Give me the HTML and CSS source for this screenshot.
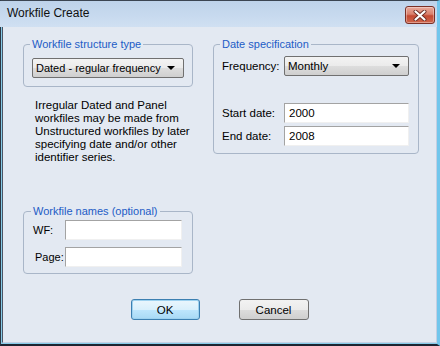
FILE: index.html
```html
<!DOCTYPE html>
<html lang="en">
<head>
    <meta charset="UTF-8">
    <title>Workfile Create</title>
    <link rel="stylesheet" href="styles.css">
</head>
<body>
    <div class="window">
        <div class="titlebar">
            <span class="title">Workfile Create</span>
            <button class="close" aria-label="Close">
                <svg width="16" height="11" viewBox="0 0 16 11">
                    <path d="M3.5 1.5 L12.5 9.5 M12.5 1.5 L3.5 9.5" stroke="#6b2c24" stroke-width="4" stroke-linecap="round"/>
                    <path d="M3.5 1.5 L12.5 9.5 M12.5 1.5 L3.5 9.5" stroke="#ffffff" stroke-width="2.2" stroke-linecap="round"/>
                </svg>
            </button>
        </div>

        <div class="client">
            <div class="columns">
                <div class="col-left">
                    <fieldset class="group group-type">
                        <legend>Workfile structure type</legend>
                        <div class="select select-type">
                            <span>Dated - regular frequency</span>
                            <i class="arrow"></i>
                        </div>
                    </fieldset>

                    <p class="note">Irregular Dated and Panel workfiles may be made from Unstructured workfiles by later specifying date and/or other identifier series.</p>

                    <fieldset class="group group-names">
                        <legend>Workfile names (optional)</legend>
                        <div class="row">
                            <label class="lbl-wf">WF:</label>
                            <div class="input"></div>
                        </div>
                        <div class="row">
                            <label class="lbl-page">Page:</label>
                            <div class="input"></div>
                        </div>
                    </fieldset>
                </div>

                <fieldset class="group group-date">
                    <legend>Date specification</legend>
                    <div class="form-grid">
                        <label>Frequency:</label>
                        <div class="select">
                            <span>Monthly</span>
                            <i class="arrow"></i>
                        </div>
                        <label class="spaced">Start date:</label>
                        <div class="input spaced">2000</div>
                        <label>End date:</label>
                        <div class="input">2008</div>
                    </div>
                </fieldset>
            </div>

            <div class="buttons">
                <button class="btn btn-default">OK</button>
                <button class="btn">Cancel</button>
            </div>
        </div>
    </div>
</body>
</html>
```

FILE: styles.css
```css
* {
    box-sizing: border-box;
}
body {
    margin: 0;
    font-family: "Liberation Sans", Arial, sans-serif;
    font-size: 11px;
    color: #000;
    background: #fff;
}
.window {
    width: 440px;
    height: 346px;
    background: #86cbe8;
    border-top: 1px solid #3b4552;
    border-left: 1px solid #2d3744;
    border-right: 3px solid #72c6ec;
    border-bottom: 2px solid #1d2430;
    display: flex;
    flex-direction: column;
}
.titlebar {
    height: 26px;
    margin-left: -1px;
    background: linear-gradient(#bed3ea, #c8daef 60%, #d0e0f2);
    display: flex;
    align-items: center;
    justify-content: space-between;
    padding: 0 2px 2px 7px;
}
.title {
    font-size: 12px;
    color: #101010;
}
.close {
    width: 30px;
    height: 18px;
    margin-top: 4px;
    padding: 0;
    border: 1px solid #7b3026;
    border-radius: 3px;
    background: linear-gradient(#e9aa9c, #d9806c 45%, #c44a33 55%, #d0674d);
    box-shadow: inset 0 0 0 1px rgba(255, 255, 255, 0.35);
    display: flex;
    align-items: center;
    justify-content: center;
}
.client {
    flex: 1;
    margin: 0 0 1px 1px;
    background: #e3e9f2;
    border-left: 1px solid #4a5566;
    border-right: 1px solid #c4cfe2;
    border-bottom: 1px solid #c4cfe2;
    padding: 10px 0 0 20px;
}
.columns {
    display: flex;
    gap: 20px;
    align-items: flex-start;
}
.col-left {
    width: 170px;
    display: flex;
    flex-direction: column;
}

/* group boxes */
.group {
    margin: 0;
    border: 1px solid #a9b6c8;
    border-radius: 4px;
    padding: 0 8px;
    min-width: 0;
}
.group legend {
    color: #1d5cc6;
    padding: 0 2px;
    margin-left: -2px;
    line-height: 14px;
}
.group-type {
    padding-top: 7px;
    padding-bottom: 8px;
}
.group-names {
    margin-top: 40px;
    padding: 2px 10px 6px 9px;
}
.group-date {
    width: 206px;
    padding: 5px 9px 7px 8px;
}

/* dropdowns */
.select {
    height: 20px;
    border: 1px solid #707070;
    border-radius: 2px;
    background: linear-gradient(#f3f3f3, #ebebeb 50%, #dddddd 51%, #cfcfcf);
    display: flex;
    align-items: center;
    justify-content: space-between;
    padding: 0 8px 0 3px;
    white-space: nowrap;
}
.select span {
    font-size: 11.5px;
}
.select-type span {
    font-size: 11px;
}
.arrow {
    width: 0;
    height: 0;
    border-left: 4px solid transparent;
    border-right: 4px solid transparent;
    border-top: 4px solid #000;
}

.note {
    margin: 12px 0 0 12px;
    line-height: 13px;
    font-size: 11.5px;
}

/* text inputs */
.input {
    height: 20px;
    background: #fff;
    border-top: 1px solid #a3a3a3;
    border-left: 1px solid #a3a3a3;
    border-right: 1px solid #f0f0f0;
    border-bottom: 1px solid #f0f0f0;
    padding: 3px 4px 0;
    font-size: 11.5px;
}
.row {
    display: flex;
    align-items: center;
    justify-content: space-between;
}
.row + .row {
    margin-top: 7px;
}
.row .input {
    width: 117px;
}
.lbl-page {
    margin-left: 2px;
}

.form-grid {
    display: grid;
    grid-template-columns: 62px 1fr;
    row-gap: 3px;
    align-items: center;
    font-size: 11.5px;
}
.form-grid .spaced {
    margin-top: 24px;
}

/* buttons */
.buttons {
    margin: 25px 0 0 -20px;
    display: flex;
    justify-content: center;
    gap: 39px;
}
.btn {
    width: 70px;
    height: 21px;
    font-family: inherit;
    font-size: 11.5px;
    color: #000;
    border: 1px solid #707070;
    border-radius: 3px;
    background: linear-gradient(#f2f2f2, #ebebeb 50%, #dddddd 51%, #cfcfcf);
    padding: 0;
}
.btn-default {
    width: 69px;
    border-color: #3c7fb1;
    background: linear-gradient(#eaf6fd, #d9f0fc 50%, #bee6fd 51%, #a7d9f5);
    box-shadow: inset 0 0 0 1px #9ed2f0;
}
```
